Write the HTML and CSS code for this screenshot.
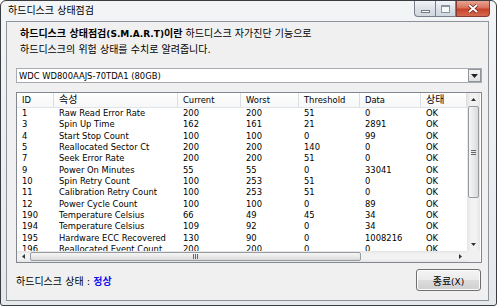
FILE: index.html
```html
<!DOCTYPE html>
<html lang="ko">
<head>
  <meta charset="UTF-8">
  <title>하드디스크 상태점검</title>
  <link rel="stylesheet" href="styles.css">
</head>
<body>
  <div class="window">
    <div class="titlebar">
      <span class="title ko">하드디스크 상태점검</span>
      <div class="caption">
        <span class="cbtn min"><i></i></span>
        <span class="cbtn max"><i></i></span>
        <span class="cbtn close">
          <svg width="12" height="9" viewBox="0 0 12 9"><path d="M2 1 L10 8 M10 1 L2 8" stroke="#5a1a10" stroke-width="3.2"/><path d="M2 1 L10 8 M10 1 L2 8" stroke="#fff" stroke-width="2"/></svg>
        </span>
      </div>
    </div>

    <div class="client">
      <p class="intro ko"><b>하드디스크 상태점검<span class="lat">(S.M.A.R.T)</span>이란</b> 하드디스크 자가진단 기능으로<br>하드디스크의 위험 상태를 수치로 알려줍니다.</p>

      <div class="combo">
        <span class="combo-text">WDC WD800AAJS-70TDA1 (80GB)</span>
        <span class="drop"><svg width="7" height="4" viewBox="0 0 7 4"><path d="M0 0 H7 L3.5 4 Z" fill="#222"/></svg></span>
      </div>

      <div class="list">
        <div class="list-view">
          <div class="row head">
            <span>ID</span><span class="ko">속성</span><span>Current</span><span>Worst</span><span>Threshold</span><span>Data</span><span class="ko">상태</span>
          </div>
          <div class="row"><span>1</span><span>Raw Read Error Rate</span><span>200</span><span>200</span><span>51</span><span>0</span><span>OK</span></div>
          <div class="row"><span>3</span><span>Spin Up Time</span><span>162</span><span>161</span><span>21</span><span>2891</span><span>OK</span></div>
          <div class="row"><span>4</span><span>Start Stop Count</span><span>100</span><span>100</span><span>0</span><span>99</span><span>OK</span></div>
          <div class="row"><span>5</span><span>Reallocated Sector Ct</span><span>200</span><span>200</span><span>140</span><span>0</span><span>OK</span></div>
          <div class="row"><span>7</span><span>Seek Error Rate</span><span>200</span><span>200</span><span>51</span><span>0</span><span>OK</span></div>
          <div class="row"><span>9</span><span>Power On Minutes</span><span>55</span><span>55</span><span>0</span><span>33041</span><span>OK</span></div>
          <div class="row"><span>10</span><span>Spin Retry Count</span><span>100</span><span>253</span><span>51</span><span>0</span><span>OK</span></div>
          <div class="row"><span>11</span><span>Calibration Retry Count</span><span>100</span><span>253</span><span>51</span><span>0</span><span>OK</span></div>
          <div class="row"><span>12</span><span>Power Cycle Count</span><span>100</span><span>100</span><span>0</span><span>89</span><span>OK</span></div>
          <div class="row"><span>190</span><span>Temperature Celsius</span><span>66</span><span>49</span><span>45</span><span>34</span><span>OK</span></div>
          <div class="row"><span>194</span><span>Temperature Celsius</span><span>109</span><span>92</span><span>0</span><span>34</span><span>OK</span></div>
          <div class="row"><span>195</span><span>Hardware ECC Recovered</span><span>130</span><span>90</span><span>0</span><span>1008216</span><span>OK</span></div>
          <div class="row"><span>196</span><span>Reallocated Event Count</span><span>200</span><span>200</span><span>0</span><span>0</span><span>OK</span></div>
        </div>

        <div class="vscroll">
          <span class="arrow"><svg width="5" height="3" viewBox="0 0 5 3"><path d="M0 3 H5 L2.5 0 Z" fill="#333"/></svg></span>
          <div class="track">
            <div class="vthumb"><i></i><i></i><i></i></div>
          </div>
          <span class="arrow"><svg width="5" height="3" viewBox="0 0 5 3"><path d="M0 0 H5 L2.5 3 Z" fill="#333"/></svg></span>
        </div>

        <div class="hscroll">
          <span class="arrow"><svg width="3" height="5" viewBox="0 0 3 5"><path d="M3 0 V5 L0 2.5 Z" fill="#333"/></svg></span>
          <div class="track">
            <div class="hthumb"><i></i><i></i><i></i></div>
          </div>
          <span class="arrow"><svg width="3" height="5" viewBox="0 0 3 5"><path d="M0 0 V5 L3 2.5 Z" fill="#333"/></svg></span>
        </div>
        <div class="corner"></div>
      </div>

      <div class="footer">
        <span class="status ko">하드디스크 상태 : <b class="good">정상</b></span>
        <button class="btn ko">종료<span class="lat">(X)</span></button>
      </div>
    </div>
  </div>
</body>
</html>
```

FILE: styles.css
```css
* {
  box-sizing: border-box;
}

body {
  margin: 0;
  font-family: "DejaVu Sans", "Noto Sans CJK KR", sans-serif;
  font-size: 8.4px;
  color: #000;
  background: #fff;
}

.ko {
  font-size: 10px;
}

.ko .lat {
  font-size: 9px;
}

.window {
  width: 497px;
  height: 306px;
  border: 1px solid #3a3d42;
  border-radius: 6px 6px 3px 3px;
  background: linear-gradient(to bottom, #f3f4f6, #e6e9ec);
  padding: 0 7px 4px 5px;
  display: flex;
  flex-direction: column;
}

/* title bar */
.titlebar {
  height: 20px;
  display: flex;
  justify-content: space-between;
  align-items: flex-start;
}

.title {
  padding-left: 2px;
  line-height: 19px;
}

.caption {
  display: flex;
  margin-right: -1px;
}

.cbtn {
  height: 16px;
  display: flex;
  align-items: center;
  justify-content: center;
  border: 1px solid #7a808a;
  border-top: none;
}

.min, .max {
  width: 21px;
  background: linear-gradient(to bottom, #f2f4f7, #dde2e8 50%, #cfd6de);
}

.min {
  border-right: none;
  border-radius: 0 0 0 4px;
}

.min i {
  width: 9px;
  height: 3px;
  margin-top: 5px;
  border: 1px solid #727b86;
  background: #fff;
}

.max i {
  width: 9px;
  height: 8px;
  border: 1px solid #8b939d;
  border-top-width: 2px;
  background: #f7f8fa;
}

.close {
  width: 34px;
  border-color: #8a3a2e;
  border-radius: 0 0 4px 0;
  background: linear-gradient(to bottom, #e8a493, #d7725c 45%, #c7432b 55%, #d26a4e);
}

/* client panel */
.client {
  flex: 1;
  border: 1px solid #8e949b;
  background: #f0f0f0;
  padding: 4px 6px 0 9px;
  display: flex;
  flex-direction: column;
}

.intro {
  margin: 0;
  padding-left: 4px;
  line-height: 15px;
}

.combo {
  margin-top: 11px;
  height: 15px;
  border: 1px solid #a7abb2;
  background: #fff;
  display: flex;
  justify-content: space-between;
  align-items: center;
}

.combo-text {
  padding-left: 2px;
}

.drop {
  width: 13px;
  height: 13px;
  border: 1px solid #8f949a;
  background: linear-gradient(to bottom, #f4f4f4, #e1e1e1);
  display: flex;
  align-items: center;
  justify-content: center;
}

/* list view */
.list {
  margin-top: 9px;
  height: 171px;
  border: 1px solid #828790;
  background: #fff;
  display: grid;
  grid-template-columns: 450px 13px;
  grid-template-rows: 158px 11px;
}

.list-view {
  overflow: hidden;
}

.row {
  display: grid;
  grid-template-columns: 37px 124px 63px 58px 61px 61px 46px;
  height: 11.33px;
  line-height: 11.33px;
}

.row span {
  padding-left: 5px;
  white-space: nowrap;
  overflow: hidden;
}

.row.head {
  height: 15px;
  line-height: 14px;
  border-bottom: 1px solid #e3e4e6;
  background: linear-gradient(to bottom, #ffffff, #f6f7f8);
}

.row.head span {
  border-right: 1px solid #dcdee1;
}

.vscroll, .hscroll {
  display: flex;
  background: linear-gradient(to right, #e5e5e5, #f2f2f2 30%, #f2f2f2 70%, #e5e5e5);
}

.vscroll {
  flex-direction: column;
}

.hscroll {
  background: linear-gradient(to bottom, #e5e5e5, #f2f2f2 30%, #f2f2f2 70%, #e5e5e5);
}

.arrow {
  flex: 0 0 13px;
  display: flex;
  align-items: center;
  justify-content: center;
}

.track {
  flex: 1;
  display: flex;
}

.vscroll .track {
  flex-direction: column;
}

.vthumb, .hthumb {
  border: 1px solid #979ba1;
  border-radius: 2px;
  display: flex;
  align-items: center;
  justify-content: center;
  gap: 1px;
}

.vthumb {
  height: 92px;
  margin: 0 1px;
  flex-direction: column;
  background: linear-gradient(to right, #f6f6f6, #e9e9e9 50%, #dadada);
}

.vthumb i {
  width: 5px;
  height: 1px;
  background: #666;
}

.hthumb {
  width: 331px;
  margin: 1px 0;
  background: linear-gradient(to bottom, #f6f6f6, #e9e9e9 50%, #dadada);
}

.hthumb i {
  width: 1px;
  height: 5px;
  background: #666;
}

.corner {
  background: #f0f0f0;
}

/* footer */
.footer {
  margin-top: 6px;
  height: 22px;
  display: flex;
  justify-content: space-between;
  align-items: center;
}

.status {
  padding-top: 1px;
}

.good {
  color: #1010f0;
}

.btn {
  width: 65px;
  height: 22px;
  margin-right: 1px;
  padding: 0;
  border: 1px solid #707070;
  border-radius: 3px;
  font-family: "DejaVu Sans", "Noto Sans CJK KR", sans-serif;
  color: #000;
  background: linear-gradient(to bottom, #f4f4f4, #ebebeb 48%, #dcdcdc 52%, #cfcfcf);
  box-shadow: inset 0 0 0 1px #fcfcfc;
}
```
